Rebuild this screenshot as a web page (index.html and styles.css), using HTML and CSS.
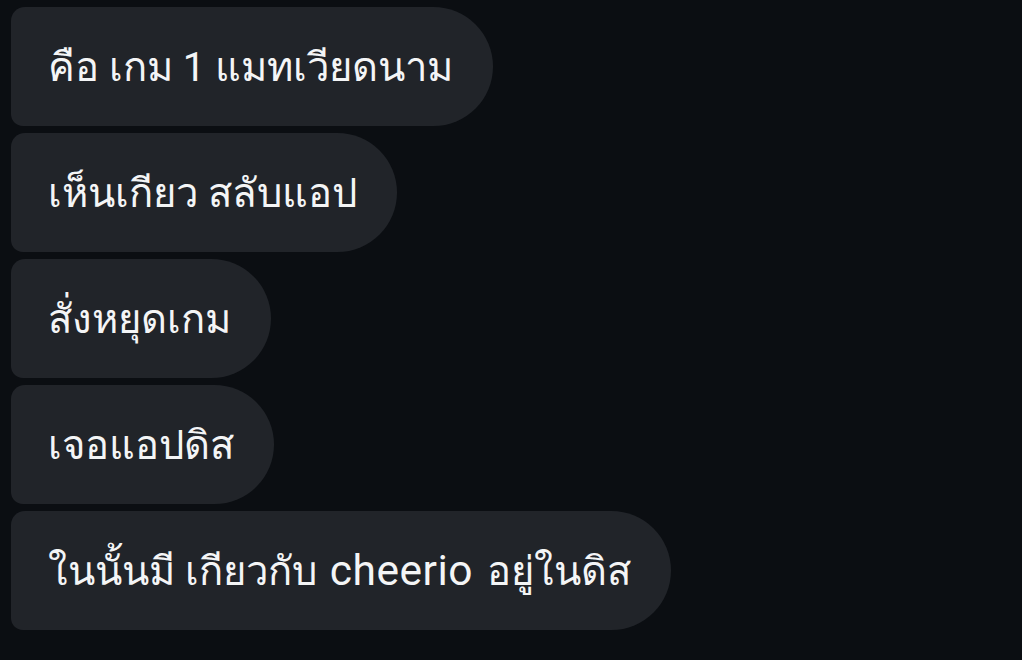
FILE: index.html
```html
<!DOCTYPE html>
<html lang="th">
<head>
<meta charset="utf-8">
<link rel="stylesheet" href="styles.css">
</head>
<body>
<div class="chat">
  <div class="bubble">คือ เกม 1 แมทเวียดนาม</div>
  <div class="bubble">เห็นเกียว สลับแอป</div>
  <div class="bubble">สั่งหยุดเกม</div>
  <div class="bubble">เจอแอปดิส</div>
  <div class="bubble">ในนั้นมี เกียวกับ <span class="latin">cheerio</span> อยู่ในดิส</div>
</div>
</body>
</html>
```
FILE: styles.css
```css
html, body {
  margin: 0;
  height: 100%;
  background: #0b0e12;
}
.chat {
  display: flex;
  flex-direction: column;
  align-items: flex-start;
  gap: 7px;
  padding: 7px 0 0 11px;
}
.bubble {
  box-sizing: border-box;
  height: 119px;
  display: flex;
  align-items: center;
  padding: 0 40px 0 37px;
  background: #212429;
  color: #f4f5f6;
  font-family: Roboto, "Noto Sans", sans-serif;
  font-size: 40px;
  border-radius: 14px 60px 60px 12px;
  white-space: pre;
}
.latin {
  font-size: 42.5px;
  letter-spacing: 0.5px;
  margin: 0 4px 0 3px;
}
```
